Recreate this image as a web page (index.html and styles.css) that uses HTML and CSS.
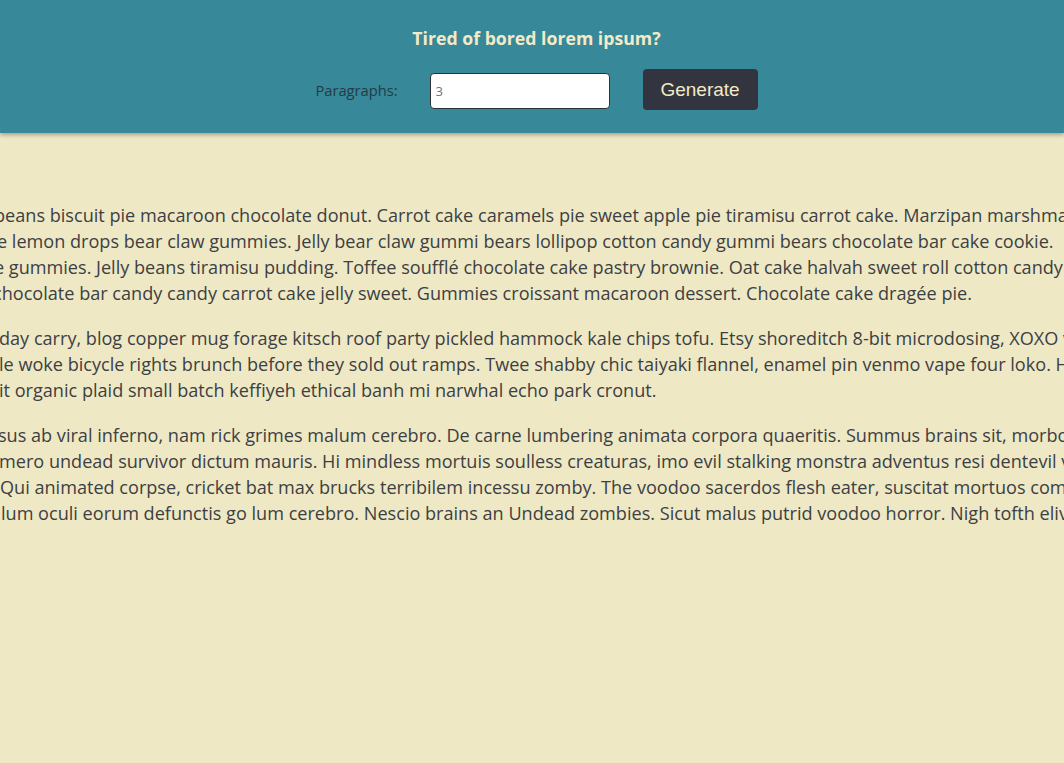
FILE: index.html
```html
<!DOCTYPE html>
<html lang="en">
<head>
<meta charset="utf-8">
<title>Lorem Ipsum Generator</title>
<link rel="stylesheet" href="styles.css">
</head>
<body>
<header class="top">
  <h1 class="title">Tired of bored lorem ipsum?</h1>
  <form class="controls">
    <label class="label" for="amount">Paragraphs:</label>
    <input class="amount" id="amount" type="text" value="3">
    <button class="btn" type="button">Generate</button>
  </form>
</header>
<main class="content">
  <p class="para">
    <span class="ln s-6">beans biscuit pie macaroon chocolate donut. Carrot cake caramels pie sweet apple pie tiramisu carrot cake. Marzipan marshmallow jelly</span>
    <span class="ln s-3">e lemon drops bear claw gummies. Jelly bear claw gummi bears lollipop cotton candy gummi bears chocolate bar cake cookie.</span>
    <span class="ln s-6">e gummies. Jelly beans tiramisu pudding. Toffee soufflé chocolate cake pastry brownie. Oat cake halvah sweet roll cotton candy tart</span>
    <span class="ln s-7">chocolate bar candy candy carrot cake jelly sweet. Gummies croissant macaroon dessert. Chocolate cake dragée pie.</span>
  </p>
  <p class="para">
    <span class="ln s-1">day carry, blog copper mug forage kitsch roof party pickled hammock kale chips tofu. Etsy shoreditch 8-bit microdosing, XOXO viral</span>
    <span class="ln s-1">le woke bicycle rights brunch before they sold out ramps. Twee shabby chic taiyaki flannel, enamel pin venmo vape four loko. Hexagon</span>
    <span class="ln s-1">it organic plaid small batch keffiyeh ethical banh mi narwhal echo park cronut.</span>
  </p>
  <p class="para">
    <span class="ln s-2">sus ab viral inferno, nam rick grimes malum cerebro. De carne lumbering animata corpora quaeritis. Summus brains sit, morbo</span>
    <span class="ln s-1">mero undead survivor dictum mauris. Hi mindless mortuis soulless creaturas, imo evil stalking monstra adventus resi dentevil vultus</span>
    <span class="ln s0">Qui animated corpse, cricket bat max brucks terribilem incessu zomby. The voodoo sacerdos flesh eater, suscitat mortuos comedere</span>
    <span class="ln s1">lum oculi eorum defunctis go lum cerebro. Nescio brains an Undead zombies. Sicut malus putrid voodoo horror. Nigh tofth eliv</span>
  </p>
</main>
</body>
</html>
```

FILE: styles.css
```css
* { box-sizing: border-box; }

html, body {
  margin: 0;
  padding: 0;
  overflow: hidden;
}

body {
  background: #efe8c5;
  font-family: "Open Sans", "Noto Sans", sans-serif;
  color: #3c4043;
  height: 763px;
}

.top {
  background: #378898;
  height: 133px;
  padding: 26px 0 0 9px;
  display: flex;
  flex-direction: column;
  align-items: center;
  box-shadow: 0 2px 4px rgba(0, 0, 0, 0.3);
  position: relative;
  z-index: 1;
}

.title {
  margin: 0;
  font-size: 17.7px;
  line-height: 24px;
  font-weight: 700;
  color: #f3eac8;
}

.controls {
  margin-top: 19px;
  display: flex;
  align-items: center;
  height: 41px;
}

.label {
  font-size: 14.7px;
  color: #243b45;
  margin-right: 32px;
}

.amount {
  width: 180px;
  height: 36px;
  border: 1px solid #2c3138;
  border-radius: 4px;
  background: #fff;
  padding: 0 5px;
  font-family: "Open Sans", sans-serif;
  font-size: 13px;
  color: #4f7e8e;
  margin-right: 33px;
  margin-top: 2px;
}

.btn {
  width: 115px;
  height: 41px;
  border: none;
  border-radius: 4px;
  background: #32343f;
  color: #f3eac8;
  font-family: "Liberation Sans", Arial, sans-serif;
  font-size: 19px;
  padding: 0;
}

.content {
  padding-top: 69px;
}

.para {
  margin: 0 0 19px;
  font-size: 18.1px;
  line-height: 26px;
}

.ln {
  display: block;
  white-space: nowrap;
}

.s-7 { margin-left: -7px; }
.s-6 { margin-left: -6px; }
.s-3 { margin-left: -3px; }
.s-2 { margin-left: -2px; }
.s-1 { margin-left: -1px; }
.s0 { margin-left: 0; }
.s1 { margin-left: 1px; }
```
